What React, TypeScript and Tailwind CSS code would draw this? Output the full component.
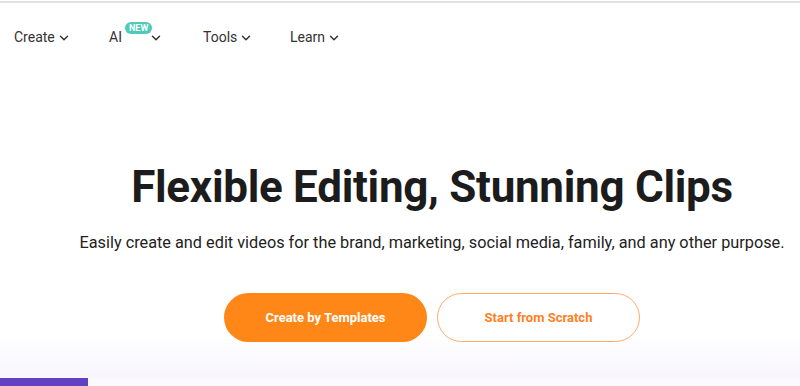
import { ChevronDown } from "lucide-react"

const navItems = ["Create", "AI", "Tools", "Learn"]

function NavItem({ label }: { label: string }) {
  if (label === "AI") {
    return (
      <div className="relative flex items-center">
        <span>AI</span>
        <span className="absolute left-[16px] top-[-5px] rounded-full bg-[#4dcbb6] px-[4px] text-[9px] font-bold leading-[12px] text-white">
          NEW
        </span>
        <ChevronDown className="ml-[27px] mt-[2px] h-[14px] w-[14px] shrink-0" strokeWidth={2.5} />
      </div>
    )
  }
  return (
    <div className="flex items-center">
      <span>{label}</span>
      <ChevronDown className="ml-[2px] mt-[2px] h-[14px] w-[14px] shrink-0" strokeWidth={2.5} />
    </div>
  )
}

export default function App() {
  return (
    <div className="flex h-[386px] w-[800px] flex-col overflow-hidden bg-white font-['Roboto',sans-serif] text-[#222]">
      <div className="mt-[1px] h-[2px] bg-[#e2e2e2]" />
      <nav className="flex h-[68px] items-center gap-[42px] pl-[14px] text-[14px] text-[#333]">
        <div className="w-[53px] shrink-0"><NavItem label={navItems[0]} /></div>
        <div className="w-[52px] shrink-0"><NavItem label={navItems[1]} /></div>
        <div className="w-[45px] shrink-0"><NavItem label={navItems[2]} /></div>
        <NavItem label={navItems[3]} />
      </nav>
      <main className="flex flex-1 flex-col items-center bg-gradient-to-b from-white from-85% to-[#f8f6fd] pl-[64px]">
        <h1 className="mt-[90px] text-[44px] font-bold leading-[52px] tracking-[-0.3px] text-[#1c1c1c]">
          Flexible Editing, Stunning Clips
        </h1>
        <p className="mt-[20px] text-[16.3px] leading-[20px] text-[#222]">
          Easily create and edit videos for the brand, marketing, social media, family, and any other purpose.
        </p>
        <div className="mt-[40px] flex gap-[10px]">
          <button className="flex h-[49px] w-[203px] items-center justify-center rounded-full bg-[#ff8717] text-[13px] font-bold text-white">
            Create by Templates
          </button>
          <button className="flex h-[49px] w-[203px] items-center justify-center rounded-full border border-[#fcab6e] bg-white text-[13px] font-bold text-[#ff7f1f]">
            Start from Scratch
          </button>
        </div>
      </main>
      <div className="h-[8px] bg-[#faf9fd]">
        <div className="h-full w-[88px] bg-[#6240c3]" />
      </div>
    </div>
  )
}
